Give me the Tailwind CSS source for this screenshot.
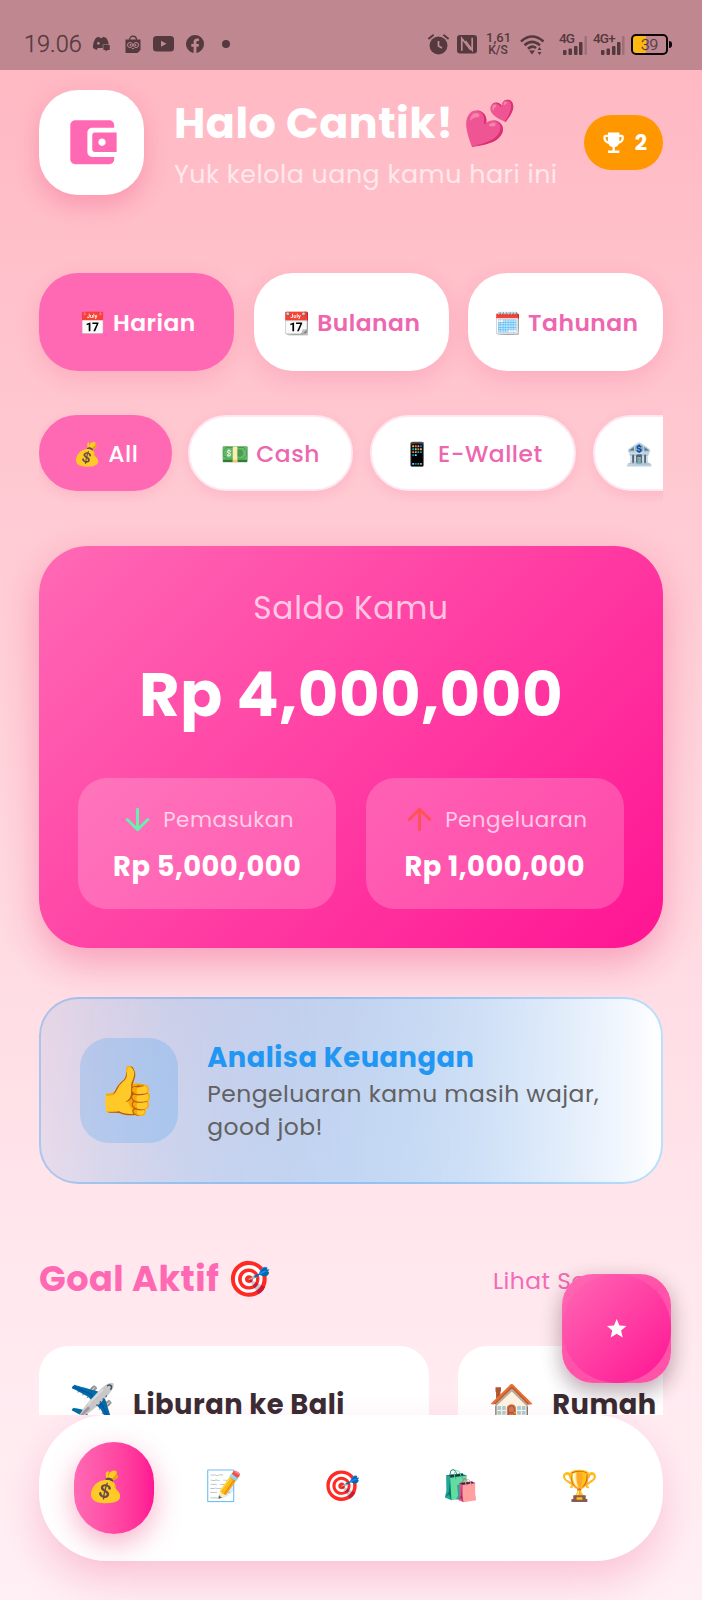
<!DOCTYPE html>
<html lang="id">
<head>
<meta charset="utf-8">
<title>Halo Cantik</title>
<script src="https://cdn.jsdelivr.net/npm/@tailwindcss/browser@4"></script>
</head>
<body class="m-0">
<div class="relative w-[702px] h-[1600px] overflow-hidden bg-linear-to-b from-[#FFB6C1] via-[#FFE8EE] via-80% to-[#FFF0F5] font-['Poppins','Inter','Noto_Color_Emoji',sans-serif] tracking-[0.4875px] whitespace-nowrap">

  <!-- Status bar -->
  <div class="relative z-10 h-[70px] bg-[#BF8890] pt-[28px] pl-[24px] pr-[30px] flex justify-between items-start tracking-normal text-[#54393f] font-['Roboto',sans-serif]">
    <div class="flex items-center h-8">
      <span class="w-[68px] text-[23.5px] leading-8 font-light tracking-[0px] [-webkit-text-stroke:0.3px]">19.06</span>
      <svg class="w-[20px] h-[18px]" viewBox="0 0 22 18"><path fill="currentColor" d="M4.5 2 8 1l.8 1.3h2.4L12 1l3.5 1c2 2.600 2.800 5 2.800 7.500h-6.500v4H6.500L5 15.500 1 13.500C.8 9 2 5 4.500 2z"/><circle cx="7" cy="8.300" r="1.500" fill="#bf8991"/><path d="M12.500 10h7v5.500H17l-2 2v-2h-2.500z" fill="currentColor"/></svg>
      <svg class="w-[16px] h-[19px] ml-[13px]" viewBox="0 0 16 19"><path d="M4.500 5C4.500 0 11.500 0 11.500 5" fill="none" stroke="currentColor" stroke-width="1.300"/><path d="M.5 4.500h15V15l-3 3H.5z" fill="currentColor"/><circle cx="5" cy="10" r="2.500" fill="none" stroke="#bf8991"/><circle cx="11" cy="10" r="2.500" fill="none" stroke="#bf8991"/><circle cx="5.500" cy="10" r=".9" fill="#bf8991"/><circle cx="10.500" cy="10" r=".9" fill="#bf8991"/><path d="M6.500 13h3L8 14.500z" fill="#bf8991"/></svg>
      <svg class="w-[21px] h-[16px] ml-[12px]" viewBox="0 0 21 16"><rect width="21" height="15.500" rx="3.500" fill="currentColor"/><path d="M8 4.800v6l5.500-3z" fill="#bf8991"/></svg>
      <svg class="w-[18px] h-[18px] ml-[12px]" viewBox="0 0 24 24"><path fill="currentColor" d="M24 12a12 12 0 1 0-13.900 11.900v-8.400H7.100V12h3V9.400c0-3 1.800-4.700 4.600-4.700 1.300 0 2.700.2 2.700.2v3h-1.500c-1.500 0-2 .9-2 1.900V12h3.400l-.5 3.500h-2.900v8.400A12 12 0 0 0 24 12z"/></svg>
      <span class="size-[8px] rounded-full bg-current ml-[18px]"></span>
    </div>
    <div class="flex items-center h-8">
      <svg class="w-[21px] h-[21px]" viewBox="0 0 21 21"><circle cx="10.500" cy="11.500" r="9" fill="currentColor"/><path d="M10.500 7v5l3.500 2" fill="none" stroke="#bf8991" stroke-width="1.800"/><path d="M1 4.500 5 1.300M20 4.500 16 1.300" stroke="currentColor" stroke-width="2" stroke-linecap="round"/></svg>
      <svg class="w-[20px] h-[19px] ml-[8px]" viewBox="0 0 20 19"><rect width="20" height="18.500" rx="3" fill="currentColor"/><path d="M4.800 15.800V3.500l9 11.500" fill="none" stroke="#bf8991" stroke-width="1.700"/><path d="M15.200 2.800V15L8.500 6" fill="none" stroke="#bf8991" stroke-width="1.700"/></svg>
      <div class="w-[24px] ml-[9px] text-center font-medium leading-[13px]"><p class="text-[13px]">1,61</p><p class="text-[12px]">K/S</p></div>
      <svg class="w-[25px] h-[21px] ml-[10px]" viewBox="0 0 25 21"><g fill="none" stroke="currentColor" stroke-width="2.600"><path d="M1 7.500Q12 -2.500 23.500 7.500"/><path d="M4.500 11.200Q12 4.500 20 11.200"/><path d="M8 14.700Q12.300 11 16 14"/></g><path d="M9 16.500h6L12 20.500z" fill="currentColor"/><path d="m17.500 16 2-3 2 3zm0 2 2 3 2-3z" fill="currentColor"/></svg>
      <div class="relative w-[27px] h-[22px] ml-[15px]"><span class="absolute left-[-1px] top-[-1px] text-[13.500px] leading-none font-medium tracking-[-0.8px]">4G</span><svg class="w-[28px] h-[22px]" viewBox="0 0 28 22"><g fill="currentColor"><rect x="3" y="17" width="3.500" height="5" rx="1"/><rect x="8.500" y="15.500" width="3.500" height="6.500" rx="1"/><rect x="14" y="13" width="3.500" height="9" rx="1"/><rect x="19" y="9" width="3.500" height="13" rx="1"/><rect x="24.500" y="3" width="2.500" height="19" rx="1" opacity=".3"/></g></svg></div>
      <div class="relative w-[31px] h-[22px] ml-[7px]"><span class="absolute left-[-1px] top-[-1px] text-[13.500px] leading-none font-medium tracking-[-0.8px]">4G+</span><svg class="w-[31px] h-[22px]" viewBox="0 0 31 22"><g fill="currentColor"><rect x="7" y="17" width="3.500" height="5" rx="1"/><rect x="12.500" y="15.500" width="3.500" height="6.500" rx="1"/><rect x="18" y="13" width="3.500" height="9" rx="1"/><rect x="23" y="9" width="3.500" height="13" rx="1"/><rect x="28" y="3" width="2.500" height="19" rx="1" opacity=".3"/></g></svg></div>
      <div class="w-[37px] h-[21px] ml-[6px] rounded-[5px] border-2 border-[#0c0809] bg-linear-to-r from-[#FDB813] from-40% to-transparent to-40% text-center text-[15.500px] leading-[18px] font-light [-webkit-text-stroke:0.3px]">39</div>
      <span class="w-[3px] h-[7px] rounded-r bg-[#0c0809] ml-[1px]"></span>
    </div>
  </div>

  <div class="px-[39px]">
    <!-- Header -->
    <header class="mt-[20px] h-[105px] flex items-center">
      <div class="size-[105px] shrink-0 rounded-[39px] bg-white shadow-[0_10px_24px_rgba(233,30,99,0.24)] flex items-center justify-center">
        <svg class="ml-[1px] size-[58.5px] text-[#FF69B4]" viewBox="0 0 24 24" fill="currentColor"><path d="M10 16V8c0-1.100.890-2 2-2h9V5c0-1.100-.9-2-2-2H5c-1.110 0-2 .9-2 2v14c0 1.100.890 2 2 2h14c1.100 0 2-.9 2-2v-1h-9c-1.110 0-2-.9-2-2z"/><path d="M13 8c-.55 0-1 .45-1 1v6c0 .55.45 1 1 1h9V8h-9zm3 5.500c-.83 0-1.500-.67-1.500-1.500s.67-1.500 1.500-1.500 1.500.67 1.500 1.500-.67 1.500-1.500 1.500z"/></svg>
      </div>
      <div class="ml-[30px] grow h-[99px]">
        <h1 class="h-[63px] text-[42.9px] leading-[60px] font-bold text-white">Halo Cantik! 💕</h1>
        <p class="text-[25.35px] leading-[36px] text-white/65">Yuk kelola uang kamu hari ini</p>
      </div>
      <div class="h-[55px] w-[79px] shrink-0 rounded-full bg-[#FF9800] text-white flex items-center pl-[15.6px] gap-[7.8px]">
        <svg class="size-[27.3px] shrink-0" viewBox="0 0 24 24" fill="currentColor"><path d="M19 5h-2V3H7v2H5c-1.100 0-2 .9-2 2v1c0 2.550 1.920 4.630 4.390 4.940.63 1.500 1.980 2.630 3.610 2.960V19H7v2h10v-2h-4v-3.100c1.630-.33 2.980-1.460 3.610-2.960C19.080 12.630 21 10.550 21 8V7c0-1.100-.9-2-2-2zM5 8V7h2v3.820C5.840 10.400 5 9.300 5 8zm14 0c0 1.300-.84 2.400-2 2.820V7h2v1z"/></svg>
        <span class="text-[21.45px] leading-[32px] font-bold">2</span>
      </div>
    </header>

    <!-- Period tabs -->
    <div class="mt-[78px] grid grid-cols-3 gap-[19.5px] text-[23.4px] leading-[100px] font-semibold text-center text-[#EE66AF]">
      <div class="h-[97.5px] rounded-[39px] bg-[#FF69B4] text-white shadow-[0_8px_24px_rgba(233,30,99,0.14)] pl-[2px]"><span class="text-[21.8px]">📅</span> Harian</div>
      <div class="h-[97.5px] rounded-[39px] bg-white shadow-[0_8px_24px_rgba(233,30,99,0.14)] pl-[2px]"><span class="text-[21.8px]">📆</span> Bulanan</div>
      <div class="h-[97.5px] rounded-[39px] bg-white shadow-[0_8px_24px_rgba(233,30,99,0.14)] pl-[2px]"><span class="text-[21.8px]">🗓️</span> Tahunan</div>
    </div>

    <!-- Wallet chips -->
    <div class="mt-[34px] h-[97.5px] flex items-center gap-[16.5px] overflow-hidden text-[23.4px] leading-[73px] font-medium text-[#EE66AF] text-center">
      <div class="w-[132.5px] h-[76px] shrink-0 rounded-[39px] border-2 border-[#FF69B4] bg-[#FF69B4] text-white shadow-[0_4px_12px_rgba(233,30,99,0.1)] pl-[1px]"><span class="text-[22.600px]">💰</span> All</div>
      <div class="w-[165px] h-[76px] shrink-0 rounded-[39px] border-2 border-[#FFE6F0] bg-white shadow-[0_4px_12px_rgba(233,30,99,0.1)]"><span class="text-[22.600px]">💵</span> Cash</div>
      <div class="w-[206.5px] h-[76px] shrink-0 rounded-[39px] border-2 border-[#FFE6F0] bg-white shadow-[0_4px_12px_rgba(233,30,99,0.1)]"><span class="text-[22.600px]">📱</span> E-Wallet</div>
      <div class="w-[170px] h-[76px] shrink-0 rounded-[39px] border-2 border-[#FFE6F0] bg-white shadow-[0_4px_12px_rgba(233,30,99,0.1)] text-left pl-[31px]"><span class="text-[22.600px]">🏦</span></div>
    </div>

    <!-- Balance -->
    <section class="mt-[44px] h-[402px] rounded-[48.75px] bg-linear-[135deg] from-[#FF69B4] to-[#FF1493] shadow-[0_15px_38px_rgba(233,30,99,0.32)] px-[39px] pt-[40px] text-white text-center">
      <p class="text-[31.2px] leading-[45px] text-white/70 tracking-[0.7px]">Saldo Kamu</p>
      <p class="mt-[21px] text-[62.4px] leading-[84px] font-bold">Rp 4,000,000</p>
      <div class="mt-[42px] grid grid-cols-2 gap-[29.25px]">
        <div class="h-[131px] rounded-[29.25px] bg-white/20 pt-[24px]">
          <div class="h-[35px] flex items-center justify-center gap-[7.8px]">
            <svg class="size-[35.1px] text-[#69F0AE]" viewBox="0 0 24 24" fill="none" stroke="currentColor" stroke-width="2" stroke-linecap="round" stroke-linejoin="round"><path d="M12 5v14M5 12l7 7 7-7"/></svg>
            <span class="text-[21.45px] leading-[34px] text-white/70">Pemasukan</span>
          </div>
          <p class="mt-[10.500px] text-[27.3px] leading-[38px] font-bold">Rp 5,000,000</p>
        </div>
        <div class="h-[131px] rounded-[29.25px] bg-white/20 pt-[24px]">
          <div class="h-[35px] flex items-center justify-center gap-[7.8px]">
            <svg class="size-[35.1px] text-[#FF5252]" viewBox="0 0 24 24" fill="none" stroke="currentColor" stroke-width="2" stroke-linecap="round" stroke-linejoin="round"><path d="M12 19V5M5 12l7-7 7 7"/></svg>
            <span class="text-[21.45px] leading-[34px] text-white/70">Pengeluaran</span>
          </div>
          <p class="mt-[10.500px] text-[27.3px] leading-[38px] font-bold">Rp 1,000,000</p>
        </div>
      </div>
    </section>

    <!-- Analysis -->
    <section class="mt-[49px] h-[187px] rounded-[39px] border-2 border-[#2196F3]/30 bg-origin-border bg-[linear-gradient(to_right,rgba(33,150,243,.1),rgba(55,160,244,.19)_10%,rgba(77,171,245,.28)_20%,rgba(100,182,247,.37)_30%,rgba(122,192,248,.46)_40%,rgba(144,202,249,.55)_50%,rgba(166,213,250,.64)_60%,rgba(188,223,251,.73)_70%,rgba(211,234,253,.82)_80%,rgba(233,244,254,.91)_90%,#fff)] flex items-center px-[39px]">
      <div class="w-[97.5px] h-[105px] shrink-0 rounded-[29.25px] bg-[#2196F3]/20 flex items-center justify-center text-[48px] leading-none tracking-normal pr-[2px]">👍</div>
      <div class="ml-[29.75px]">
        <h2 class="text-[27.3px] leading-[40px] font-bold text-[#2196F3]">Analisa Keuangan</h2>
        <p class="text-[23.4px] leading-[32.76px] text-[#616161]">Pengeluaran kamu masih wajar,<br>good job!</p>
      </div>
    </section>

    <!-- Goals -->
    <div class="mt-[67px] h-[56px] flex items-center text-[#FF69B4]">
      <h2 class="text-[35.1px] leading-[58px] font-bold grow">Goal Aktif 🎯</h2>
      <span class="w-[170px] text-[23.4px] leading-[56px] pt-[4px] text-[#F56AB6]">Lihat Semua</span>
    </div>
    <div class="mt-[38.500px] h-[69px] flex gap-[29.25px] overflow-x-hidden overflow-y-clip text-[27.3px] font-bold text-[#3a2c33]">
      <div class="w-[390px] h-[260px] shrink-0 rounded-[29.25px] bg-white pl-[30px] pt-[30.5px] flex items-start">
        <span class="w-[64px] text-[38px] leading-[56px] tracking-normal">✈️</span><span class="leading-[58px]">Liburan ke Bali</span>
      </div>
      <div class="w-[390px] h-[260px] shrink-0 rounded-[29.25px] bg-white pl-[30px] pt-[30.5px] flex items-start">
        <span class="w-[64px] text-[38px] leading-[56px] tracking-normal">🏠</span><span class="leading-[58px]">Rumah</span>
      </div>
    </div>

    <!-- Bottom navigation -->
    <nav class="relative h-[146px] rounded-[68px] bg-white shadow-[0_20px_40px_rgba(233,30,99,0.2)] px-[35px] flex items-center text-[29.8px] leading-none tracking-normal">
      <div class="w-[80px] h-[92px] rounded-[40px] bg-linear-to-r from-[#FF69B4] to-[#FF1493] shadow-[0_10px_28px_rgba(233,30,99,0.34)] pl-[13px] pb-[2px] flex items-center">💰</div>
      <div class="w-[118.5px] pl-[51px] pb-[3px]">📝</div>
      <div class="w-[118.5px] pl-[51px] pb-[3px]">🎯</div>
      <div class="w-[118.5px] pl-[51px] pb-[3px]">🛍️</div>
      <div class="w-[118.5px] pl-[52px] pb-[3px]">🏆</div>
    </nav>
  </div>

  <!-- Floating action button -->
  <button class="absolute left-[562px] top-[1274px] size-[109px] rounded-[31.2px] bg-[linear-gradient(135deg,#FF69B4,#FF52A8_50%)] shadow-[0_10px_20px_rgba(60,0,30,0.25),0_4px_24px_rgba(60,0,30,0.12)]">
    <span class="flex size-full items-center justify-center rounded-[54.5px] bg-linear-[135deg] from-[#FF69B4] to-[#FF1493]">
      <svg class="size-[23.4px] text-white" viewBox="0 0 24 24" fill="currentColor"><path d="M12 17.270 18.180 21l-1.640-7.030L22 9.240l-7.190-.61L12 2 9.190 8.630 2 9.240l5.460 4.730L5.820 21z"/></svg>
    </span>
  </button>
</div>
</body>
</html>
